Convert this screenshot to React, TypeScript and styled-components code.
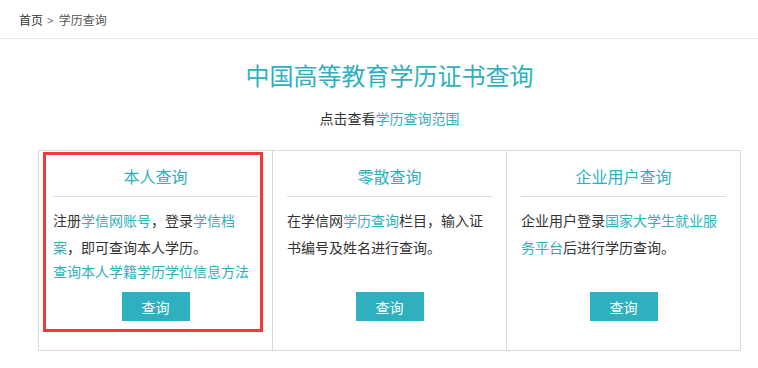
import React from "react";
import styled, { createGlobalStyle } from "styled-components";

const teal = "#2fb0be";

const GlobalStyle = createGlobalStyle`
  html, body {
    margin: 0;
    padding: 0;
    background: #fff;
  }
  body {
    font-family: "Noto Sans CJK SC", "Noto Sans", sans-serif;
    color: #333;
  }
`;

const Page = styled.div`
  width: 758px;
`;

const Breadcrumb = styled.nav`
  height: 38px;
  line-height: 39px;
  padding-left: 19px;
  font-size: 12px;
  color: #333;
  border-bottom: 1px solid #e6e6e6;
`;

const Crumb = styled.span<{ $current?: boolean }>`
  color: ${({ $current }) => ($current ? "#555" : "#333")};
`;

const Sep = styled.span`
  margin: 0 5px 0 4px;
  color: #777;
`;

const Content = styled.main`
  margin-left: 38px;
  width: 703px;
`;

const Title = styled.h1`
  margin: 20px 0 0;
  text-align: center;
  font-size: 24px;
  line-height: 32px;
  font-weight: 400;
  color: ${teal};
`;

const Subtitle = styled.p`
  margin: 17px 0 0;
  text-align: center;
  font-size: 14px;
  line-height: 20px;
  color: #333;
`;

const Link = styled.a`
  color: ${teal};
  text-decoration: none;
  cursor: pointer;
`;

const Table = styled.div`
  margin-top: 22px;
  display: grid;
  grid-template-columns: repeat(3, 233px);
  column-gap: 1px;
  background: #d9d9d9;
  border: 1px solid #d9d9d9;
`;

const Cell = styled.div`
  position: relative;
  height: 199px;
  box-sizing: border-box;
  padding: 13px 14px 29px;
  background: #fff;
  display: flex;
  flex-direction: column;
`;

const Highlight = styled.div`
  position: absolute;
  left: 4px;
  top: 1px;
  width: 220px;
  height: 180px;
  box-sizing: border-box;
  border: 3px solid #f03a3a;
  pointer-events: none;
`;

const CellTitle = styled.h2`
  margin: 0;
  padding-bottom: 8px;
  border-bottom: 1px solid #dcdcdc;
  text-align: center;
  font-size: 16px;
  line-height: 24px;
  font-weight: 400;
  color: ${teal};
`;

const Body = styled.p<{ $maxWidth?: number }>`
  margin: 10px 0 0;
  max-width: ${({ $maxWidth }) => ($maxWidth ? `${$maxWidth}px` : "none")};
  font-size: 14px;
  line-height: 27px;
  color: #333;
`;

const ExtraLink = styled(Link)`
  display: block;
  font-size: 14px;
  line-height: 21px;
`;

const Button = styled.button`
  margin: auto auto 0;
  width: 68px;
  height: 29px;
  padding: 0;
  border: none;
  background: ${teal};
  color: #fff;
  font-family: inherit;
  font-size: 14px;
  cursor: pointer;
`;

export default function App() {
  return (
    <Page>
      <GlobalStyle />
      <Breadcrumb>
        <Crumb>首页</Crumb>
        <Sep>&gt;</Sep>
        <Crumb $current>学历查询</Crumb>
      </Breadcrumb>

      <Content>
        <Title>中国高等教育学历证书查询</Title>
        <Subtitle>
          点击查看<Link>学历查询范围</Link>
        </Subtitle>

        <Table>
          <Cell>
            <Highlight />
            <CellTitle>本人查询</CellTitle>
            <Body $maxWidth={190}>
              注册<Link>学信网账号</Link>，登录<Link>学信档案</Link>，即可查询本人学历。
            </Body>
            <ExtraLink>查询本人学籍学历学位信息方法</ExtraLink>
            <Button>查询</Button>
          </Cell>
          <Cell>
            <CellTitle>零散查询</CellTitle>
            <Body>
              在学信网<Link>学历查询</Link>栏目，输入证书编号及姓名进行查询。
            </Body>
            <Button>查询</Button>
          </Cell>
          <Cell>
            <CellTitle>企业用户查询</CellTitle>
            <Body>
              企业用户登录<Link>国家大学生就业服务平台</Link>后进行学历查询。
            </Body>
            <Button>查询</Button>
          </Cell>
        </Table>
      </Content>
    </Page>
  );
}
